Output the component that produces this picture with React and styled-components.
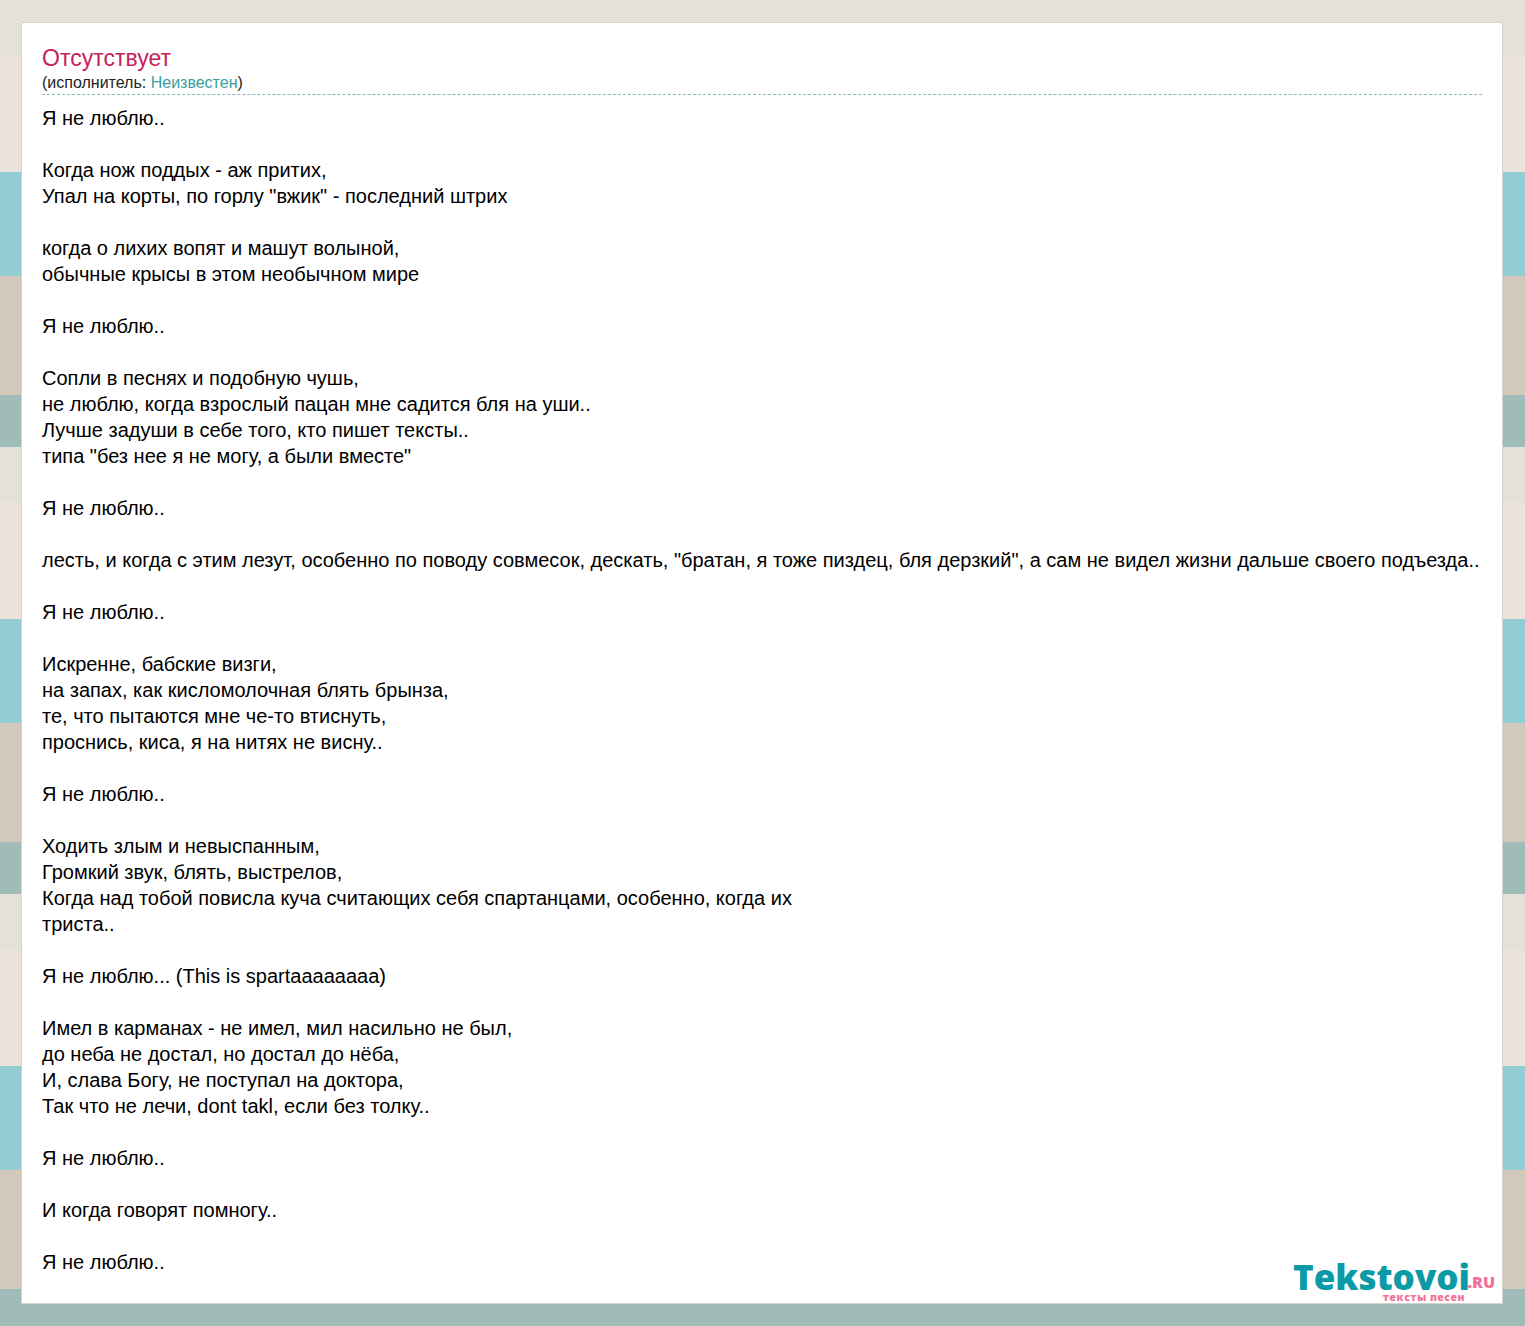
import React from 'react';
import styled, { createGlobalStyle } from 'styled-components';

const lyrics = `Я не люблю..

Когда нож поддых - аж притих,
Упал на корты, по горлу "вжик" - последний штрих

когда о лихих вопят и машут волыной,
обычные крысы в этом необычном мире

Я не люблю..

Сопли в песнях и подобную чушь,
не люблю, когда взрослый пацан мне садится бля на уши..
Лучше задуши в себе того, кто пишет тексты..
типа "без нее я не могу, а были вместе"

Я не люблю..

лесть, и когда с этим лезут, особенно по поводу совмесок, дескать, "братан, я тоже пиздец, бля дерзкий", а сам не видел жизни дальше своего подъезда..

Я не люблю..

Искренне, бабские визги,
на запах, как кисломолочная блять брынза,
те, что пытаются мне че-то втиснуть,
проснись, киса, я на нитях не висну..

Я не люблю..

Ходить злым и невыспанным,
Громкий звук, блять, выстрелов,
Когда над тобой повисла куча считающих себя спартанцами, особенно, когда их
триста..

Я не люблю... (This is spartaaaaaaaa)

Имел в карманах - не имел, мил насильно не был,
до неба не достал, но достал до нёба,
И, слава Богу, не поступал на доктора,
Так что не лечи, dont takl, если без толку..

Я не люблю..

И когда говорят помногу..

Я не люблю..`;

const GlobalStyle = createGlobalStyle`
  html, body {
    margin: 0;
    padding: 0;
  }
  body {
    font-family: "Liberation Sans", Arial, sans-serif;
    color: #000;
    background-color: #e3e1d8;
    background-image: linear-gradient(
      to bottom,
      #e3e1d8 0 55px,
      #e9e3dc 55px 172px,
      #93cdd3 172px 276px,
      #d3c9bb 276px 395px,
      #9fbcb8 395px 447px
    );
    background-size: 100% 447px;
  }
`;

const Page = styled.div`
  padding: 22px 22px 22px 21px;
  height: 1326px;
  box-sizing: border-box;
`;

const Card = styled.main`
  position: relative;
  box-sizing: border-box;
  height: 1282px;
  padding: 21px 20px 0;
  background: #fff;
  border: 1px solid #d6d3cc;
`;

const Heading = styled.header`
  border-bottom: 1px dashed #8db5b5;
  height: 50px;
`;

const Title = styled.h1`
  margin: 0;
  font-size: 23px;
  font-weight: normal;
  line-height: 28px;
  color: #c8215a;
`;

const Performer = styled.div`
  font-size: 16px;
  line-height: 22px;
  color: #222;

  a {
    color: #3a9ea3;
    text-decoration: none;
  }
`;

const Lyrics = styled.div`
  margin-top: 10px;
  font-size: 20px;
  line-height: 26px;
  white-space: pre;
`;

const Logo = styled.div`
  position: absolute;
  right: 7px;
  bottom: 0;
  width: 202px;
  height: 44px;
  font-family: "Open Sans", sans-serif;
  font-weight: 800;
  white-space: nowrap;
`;

const LogoName = styled.span`
  position: absolute;
  left: 0;
  top: 0;
  font-size: 35px;
  line-height: 36px;
  color: #0c9ba6;
`;

const LogoDomain = styled.span`
  position: absolute;
  right: 0;
  top: 13px;
  font-size: 16px;
  line-height: 20px;
  color: #f4709a;
`;

const LogoTagline = styled.span`
  position: absolute;
  right: 30px;
  bottom: 0;
  font-size: 10.5px;
  line-height: 12px;
  letter-spacing: 0.5px;
  color: #f4709a;
`;

export default function App() {
  return (
    <>
      <GlobalStyle />
      <Page>
        <Card>
          <Heading>
            <Title>Отсутствует</Title>
            <Performer>
              (исполнитель: <a href="#artist">Неизвестен</a>)
            </Performer>
          </Heading>
          <Lyrics>{lyrics}</Lyrics>
          <Logo>
            <LogoName>Tekstovoi</LogoName>
            <LogoDomain>.RU</LogoDomain>
            <LogoTagline>тексты песен</LogoTagline>
          </Logo>
        </Card>
      </Page>
    </>
  );
}
